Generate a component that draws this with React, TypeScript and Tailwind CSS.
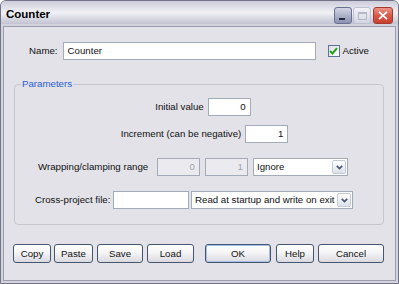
import React from 'react';

type BoxProps = { w: string; value?: string; right?: boolean; disabled?: boolean };

function TextBox({ w, value = '', right = false, disabled = false }: BoxProps) {
  return (
    <div
      className={`h-[18px] ${w} shrink-0 border border-[#a3abb8] flex items-center px-[4px] ${
        disabled ? 'bg-[#ebebef] text-[#a2a2aa]' : 'bg-white'
      } ${right ? 'justify-end' : ''}`}
    >
      {value}
    </div>
  );
}

function Select({ w, value }: { w: string; value: string }) {
  return (
    <div className={`h-[18px] ${w} shrink-0 border border-[#a3abb8] bg-white flex items-center p-[1px]`}>
      <span className="flex-1 pl-[2px] whitespace-nowrap overflow-hidden">{value}</span>
      <div className="w-[14px] h-full rounded-[2px] border border-[#c4cbd8] bg-gradient-to-b from-white to-[#dde1ea] flex items-center justify-center">
        <svg width="7" height="5" viewBox="0 0 7 5">
          <path d="M0.8 0.8 L3.5 3.6 L6.2 0.8" stroke="#4b5670" strokeWidth="1.7" fill="none" />
        </svg>
      </div>
    </div>
  );
}

function Btn({ label, w, def = false }: { label: string; w: string; def?: boolean }) {
  return (
    <button
      className={`h-[19px] ${w} shrink-0 rounded-[3px] border border-[#45566f] bg-gradient-to-b from-white via-[#f3f3f5] to-[#d9d9e0] flex items-center justify-center ${
        def ? 'shadow-[inset_0_0_0_1px_#a7bfe8]' : ''
      }`}
    >
      {label}
    </button>
  );
}

export default function App() {
  return (
    <div className="w-[399px] h-[284px] flex flex-col bg-[#d3d3de] border border-[#727288] rounded-t-[6px] overflow-hidden font-['Liberation_Sans',Arial,sans-serif] text-[9.7px] leading-[12px] text-[#111]">
      {/* Title bar */}
      <div className="h-[23px] shrink-0 flex items-center pl-[5px] pr-[5px] bg-gradient-to-b from-[#cdcddb] via-[#f1f1f5] to-[#c3c3d3]">
        <span className="font-bold text-[11.5px] text-black mt-[2px]">Counter</span>
        <div className="ml-auto flex gap-[1px] mt-[6px]">
          <div className="w-[18px] h-[17px] rounded-[3px] border border-[#6b7090] bg-gradient-to-b from-[#d2d5e4] to-[#8b92b2] flex items-end pl-[4px] pb-[3px]">
            <div className="w-[6px] h-[2px] bg-[#262b44]" />
          </div>
          <div className="w-[18px] h-[17px] rounded-[3px] border border-[#bcc0cf] bg-gradient-to-b from-[#f2f3f8] to-[#d3d6e3] flex items-center justify-center">
            <div className="w-[9px] h-[8px] border border-[#b3b7c6] border-t-2" />
          </div>
          <div className="w-[20px] h-[17px] ml-[1px] rounded-[3px] border border-[#a23a2e] bg-gradient-to-b from-[#ec9488] via-[#d85a4a] to-[#c8402f] flex items-center justify-center">
            <svg width="10" height="9" viewBox="0 0 10 9">
              <path d="M1 0.8 L9 8.2 M9 0.8 L1 8.2" stroke="white" strokeWidth="1.8" />
            </svg>
          </div>
        </div>
      </div>

      {/* Client area */}
      <div className="flex-1 mx-[2px] mb-[2px] mt-[2px] border border-[#9c9cae] bg-[#e2e2e8] flex flex-col">
        {/* Name row */}
        <div className="flex items-center pl-[25px] pt-[15px]">
          <span>Name:</span>
          <div className="ml-[5px]">
            <TextBox w="w-[253px]" value="Counter" />
          </div>
          <div className="ml-[12px] w-[12px] h-[12px] border border-[#5a7396] bg-gradient-to-br from-[#dcdce2] to-white flex items-center justify-center">
            <svg width="9" height="8" viewBox="0 0 9 8">
              <path d="M1 4 L3.5 6.5 L8 1.2" stroke="#21a121" strokeWidth="2" fill="none" />
            </svg>
          </div>
          <span className="ml-[3px]">Active</span>
        </div>

        {/* Parameters group */}
        <fieldset className="ml-[10px] mt-[18px] w-[370px] border border-[#c6c6ce] rounded-[4px]">
          <legend className="ml-[6px] px-[1px] text-[#2b5cd2]">Parameters</legend>
          <div className="flex flex-col pt-[8px] pb-[15px]">
            <div className="flex items-center justify-center pl-[8px]">
              <span>Initial value</span>
              <div className="ml-[4px]">
                <TextBox w="w-[43px]" value="0" right />
              </div>
            </div>
            <div className="flex items-center justify-center pl-[11px] mt-[9px]">
              <span>Increment (can be negative)</span>
              <div className="ml-[4px]">
                <TextBox w="w-[43px]" value="1" right />
              </div>
            </div>
            <div className="flex items-center pl-[23px] mt-[15px]">
              <span className="w-[119px] shrink-0 whitespace-nowrap">Wrapping/clamping range</span>
              <TextBox w="w-[43px]" value="0" right disabled />
              <div className="ml-[5px]">
                <TextBox w="w-[43px]" value="1" right disabled />
              </div>
              <div className="ml-[5px]">
                <Select w="w-[95px]" value="Ignore" />
              </div>
            </div>
            <div className="flex items-center pl-[20px] mt-[15px]">
              <span className="w-[78px] shrink-0 whitespace-nowrap">Cross-project file:</span>
              <TextBox w="w-[76px]" />
              <div className="ml-[2px]">
                <Select w="w-[162px]" value="Read at startup and write on exit" />
              </div>
            </div>
          </div>
        </fieldset>

        {/* Buttons */}
        <div className="flex items-center pl-[9px] mt-[19px]">
          <Btn label="Copy" w="w-[38px]" />
          <div className="ml-[3px]"><Btn label="Paste" w="w-[39px]" /></div>
          <div className="ml-[4px]"><Btn label="Save" w="w-[46px]" /></div>
          <div className="ml-[4px]"><Btn label="Load" w="w-[47px]" /></div>
          <div className="ml-[11px]"><Btn label="OK" w="w-[66px]" def /></div>
          <div className="ml-[5px]"><Btn label="Help" w="w-[38px]" /></div>
          <div className="ml-[4px]"><Btn label="Cancel" w="w-[66px]" /></div>
        </div>
      </div>
    </div>
  );
}
